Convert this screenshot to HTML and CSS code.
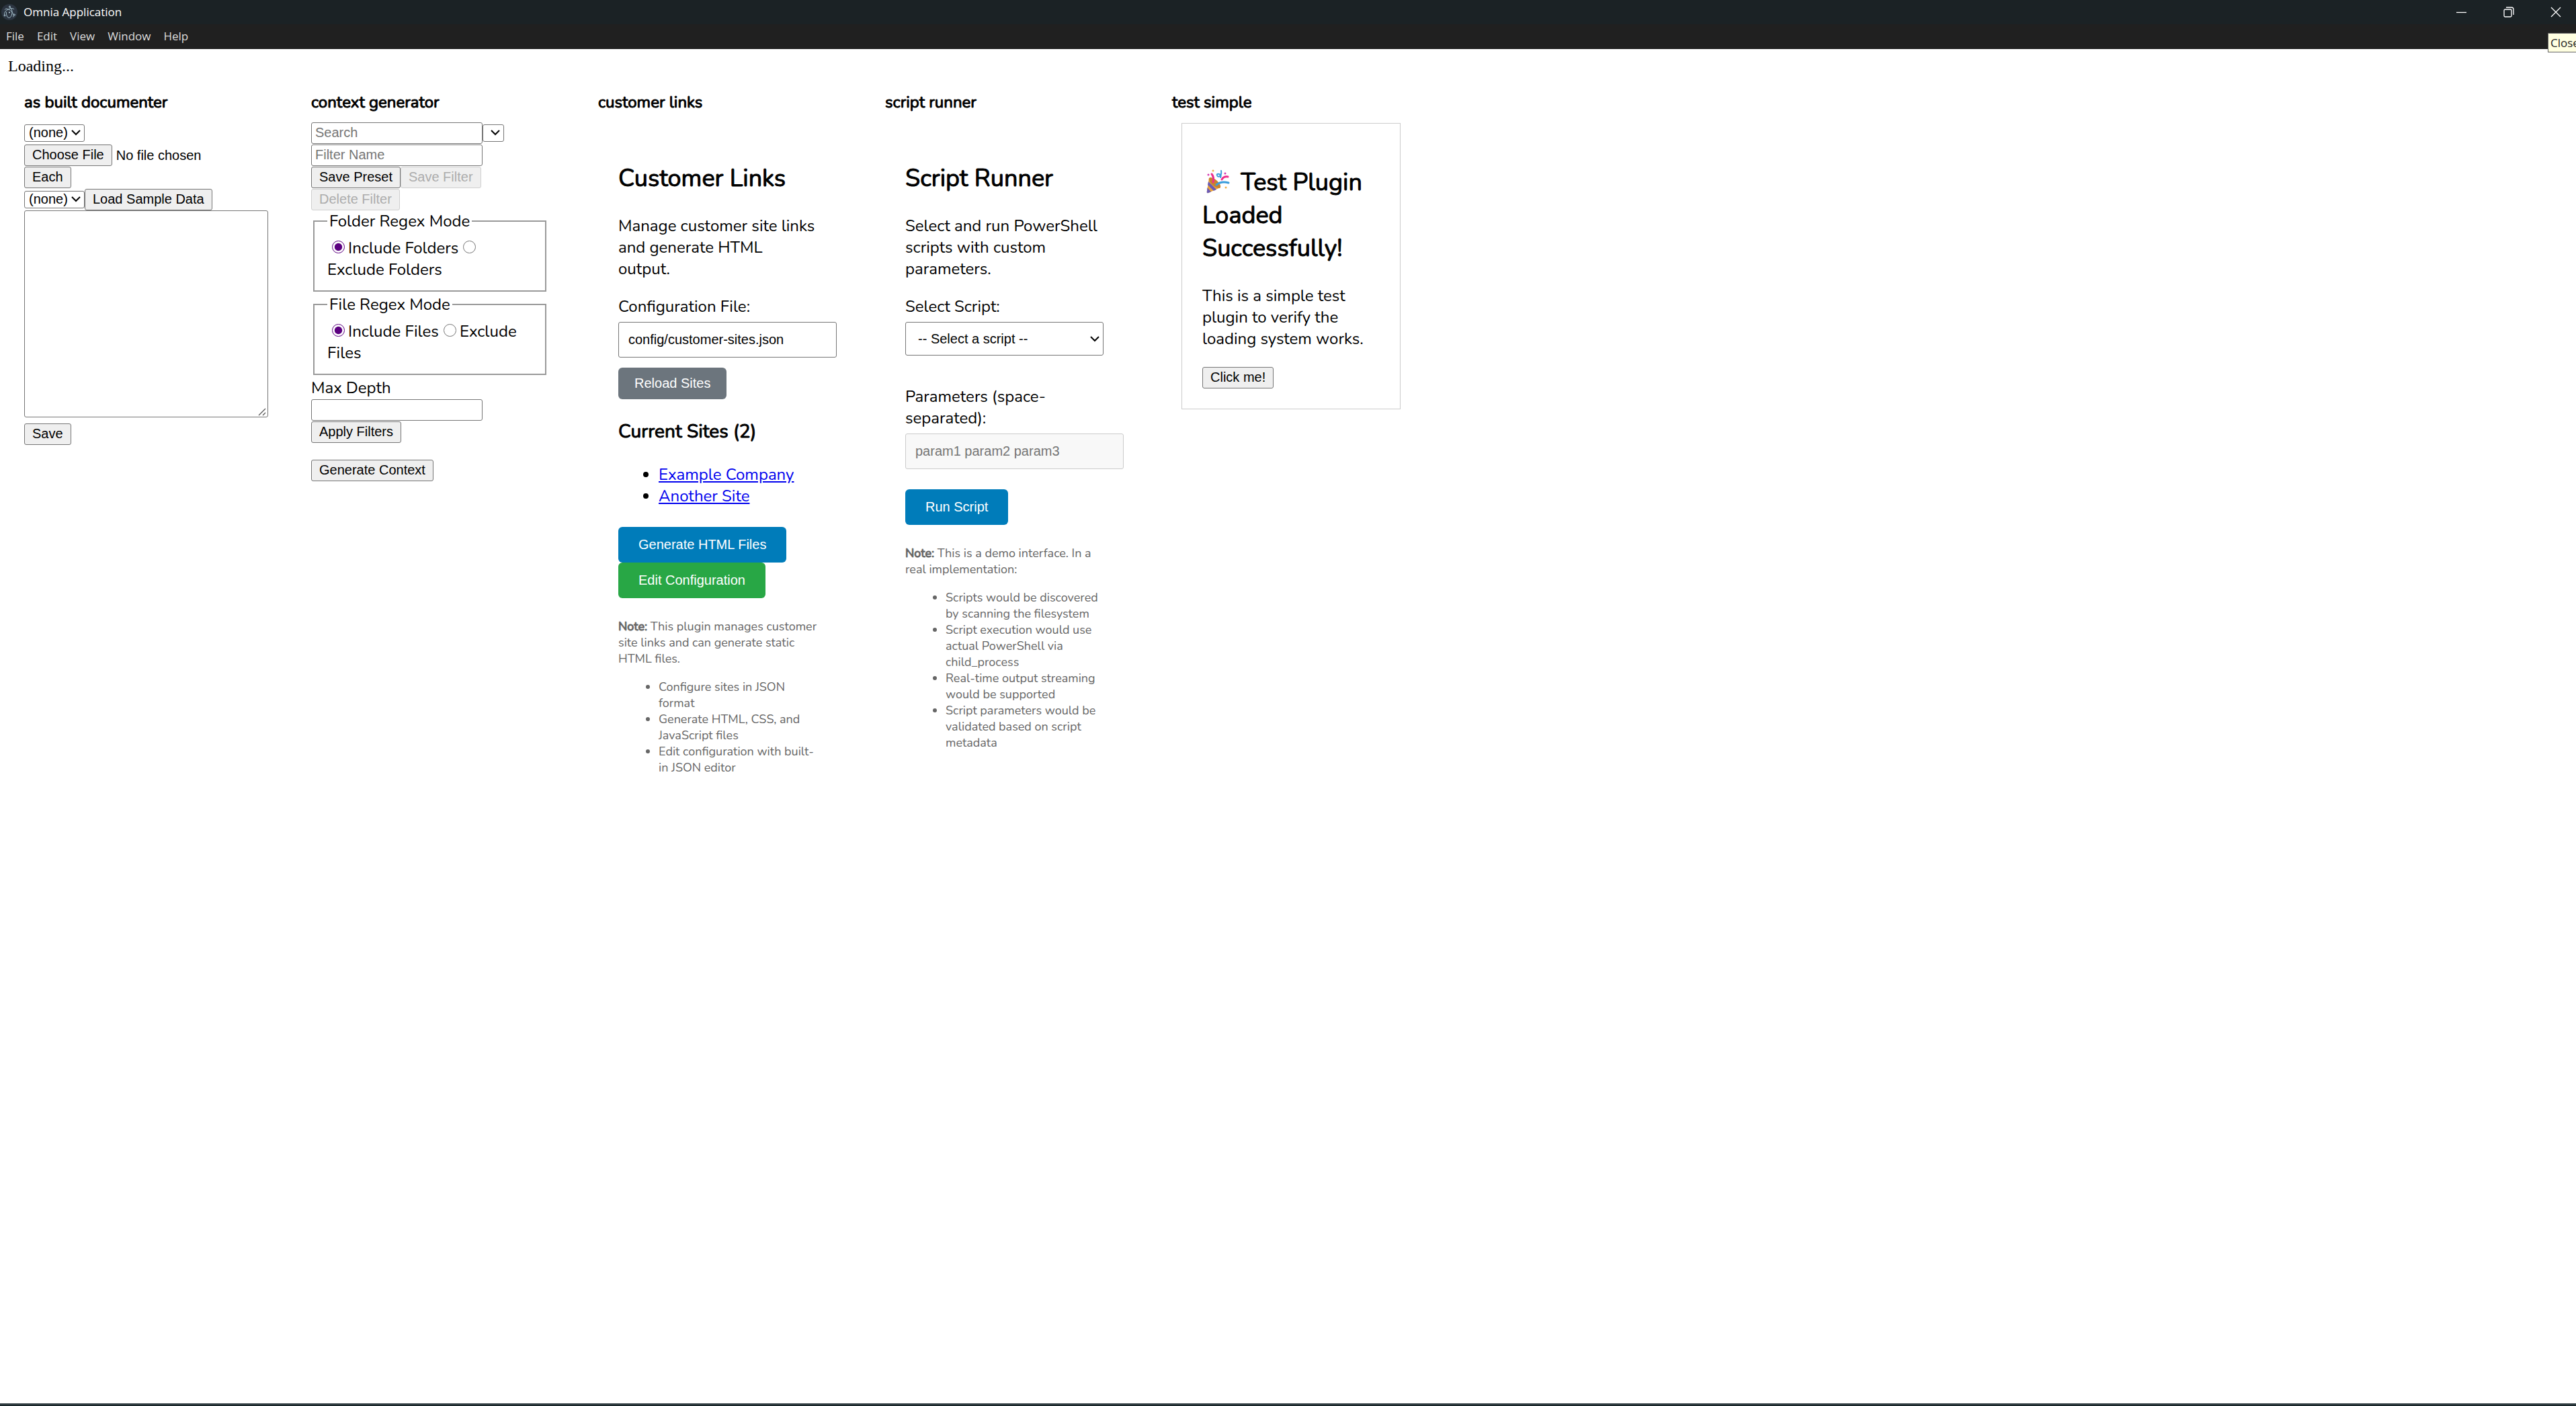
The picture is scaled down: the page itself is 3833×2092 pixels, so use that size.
FILE: index.html
```html
<!DOCTYPE html>
<html lang="en">
<head>
<meta charset="utf-8">
<meta name="viewport" content="width=device-width, initial-scale=1">
<title>Omnia Application</title>
<link rel="stylesheet" href="styles.css">
</head>
<body>
<header class="window-chrome">
  <div class="titlebar">
    <svg class="app-icon" viewBox="0 0 24 24" aria-hidden="true">
      <circle cx="12" cy="12" r="12" fill="#2b3440"/>
      <g fill="none" stroke="#a9c4d0" stroke-width="1">
        <path d="M5 16.500C3.500 14 6 10 10 8s8-2 9 0"/>
        <path d="M5 8.500C7 5.500 11.500 7.500 15 11s4 7.500 2 8.500"/>
        <path d="M11 4.500C14 4 16 8 16 12s-2 8.500-4.500 8.500S7 16.500 7.500 12"/>
        <circle cx="12.500" cy="4" r="1"/><circle cx="5" cy="17" r="1"/><circle cx="19.500" cy="16" r="1"/>
      </g>
      <circle cx="12" cy="12.500" r="1" fill="#c9e2ec"/>
    </svg>
    <span class="title">Omnia Application</span>
    <div class="window-buttons">
      <button type="button" class="window-button" aria-label="Minimize"><svg viewBox="0 0 16 16"><path d="M0 8.500h15"/></svg></button>
      <button type="button" class="window-button" aria-label="Restore"><svg viewBox="0 0 16 16"><rect x="1" y="4" width="11" height="11" rx="1.500"/><path d="M4 1h8a3 3 0 0 1 3 3v8"/></svg></button>
      <button type="button" class="window-button" aria-label="Close" aria-describedby="close-tip"><svg viewBox="0 0 16 16"><path d="M1 1l14 14M15 1L1 15"/></svg></button>
    </div>
  </div>
  <nav class="menubar">
    <button type="button">File</button>
    <button type="button">Edit</button>
    <button type="button">View</button>
    <button type="button">Window</button>
    <button type="button">Help</button>
  </nav>
  <div class="tooltip" id="close-tip" role="tooltip">Close</div>
</header>

<main class="content">
  <p class="status">Loading...</p>
  <div class="plugins">

    <section class="plugin">
      <h4>as built documenter</h4>
      <div class="row"><select aria-label="Template"><option>(none)</option></select></div>
      <div class="row"><input type="file" aria-label="Choose file"></div>
      <div class="row"><button type="button">Each</button></div>
      <div class="row"><select aria-label="Sample"><option>(none)</option></select><button type="button">Load Sample Data</button></div>
      <textarea aria-label="Document"></textarea>
      <div class="row save-row"><button type="button">Save</button></div>
    </section>

    <section class="plugin">
      <h4>context generator</h4>
      <div class="row"><input type="text" placeholder="Search" aria-label="Search"><select class="narrow" aria-label="Presets"><option></option></select></div>
      <div class="row"><input type="text" placeholder="Filter Name" aria-label="Filter Name"></div>
      <div class="row"><button type="button">Save Preset</button><button type="button" disabled>Save Filter</button></div>
      <div class="row"><button type="button" disabled>Delete Filter</button></div>
      <fieldset>
        <legend>Folder Regex Mode</legend>
        <label><input type="radio" name="folder-mode" checked>Include Folders</label><label><input type="radio" name="folder-mode">
        Exclude Folders</label>
      </fieldset>
      <fieldset>
        <legend>File Regex Mode</legend>
        <label><input type="radio" name="file-mode" checked>Include Files</label><label><input type="radio" name="file-mode">Exclude Files</label>
      </fieldset>
      <label class="block" for="depth">Max Depth</label>
      <div class="row"><input type="text" id="depth"></div>
      <div class="row"><button type="button">Apply Filters</button></div>
      <div class="row generate-row"><button type="button">Generate Context</button></div>
    </section>

    <section class="plugin">
      <h4>customer links</h4>
      <div class="panel">
        <h2>Customer Links</h2>
        <p>Manage customer site links and generate HTML output.</p>
        <label class="block" for="config">Configuration File:</label>
        <input type="text" class="large" id="config" value="config/customer-sites.json">
        <button type="button" class="action gray">Reload Sites</button>
        <h3>Current Sites (2)</h3>
        <ul>
          <li><a href="#example">Example Company</a></li>
          <li><a href="#another">Another Site</a></li>
        </ul>
        <div class="actions">
          <button type="button" class="action blue">Generate HTML Files</button>
          <button type="button" class="action green">Edit Configuration</button>
        </div>
        <div class="note">
          <p><strong>Note:</strong> This plugin manages customer site links and can generate static HTML files.</p>
          <ul>
            <li>Configure sites in JSON format</li>
            <li>Generate HTML, CSS, and JavaScript files</li>
            <li>Edit configuration with built-in JSON editor</li>
          </ul>
        </div>
      </div>
    </section>

    <section class="plugin">
      <h4>script runner</h4>
      <div class="panel">
        <h2>Script Runner</h2>
        <p>Select and run PowerShell scripts with custom parameters.</p>
        <label class="block" for="script">Select Script:</label>
        <select class="large" id="script"><option>-- Select a script --</option></select>
        <label class="block params" for="params">Parameters (space-separated):</label>
        <input type="text" class="large" id="params" placeholder="param1 param2 param3" disabled>
        <div class="actions">
          <button type="button" class="action blue">Run Script</button>
        </div>
        <div class="note">
          <p><strong>Note:</strong> This is a demo interface. In a real implementation:</p>
          <ul>
            <li>Scripts would be discovered by scanning the filesystem</li>
            <li>Script execution would use actual PowerShell via child_process</li>
            <li>Real-time output streaming would be supported</li>
            <li>Script parameters would be validated based on script metadata</li>
          </ul>
        </div>
      </div>
    </section>

    <section class="plugin">
      <h4>test simple</h4>
      <div class="card">
        <h2><svg class="popper" viewBox="0 0 48 36" role="img" aria-label="Party popper">
          <path d="M10 13L27 27 9 35Q6 36 7 32Z" fill="#e8a33d"/>
          <path d="M9 18L21 30 17 32 8 23Z M7.500 27L13 33.500 9 35Q6 36 7 32Z" fill="#6b5bb5"/>
          <ellipse cx="18.500" cy="20" rx="11" ry="4.500" transform="rotate(41 18.500 20)" fill="#c9812f"/>
          <g fill="none" stroke-width="3" stroke-linecap="round">
            <path d="M14 7q4 5 2 12" stroke="#ec2f8c"/>
            <path d="M29 15q3-5 9-4" stroke="#ec2f8c"/>
            <path d="M21 23q7-6 18-3" stroke="#3b9ddb"/>
            <path d="M28 2q1 6-2 8t-4-1 3-2 2 5" stroke="#3b9ddb" stroke-width="2"/>
          </g>
          <circle cx="16" cy="2" r="1.500" fill="#eeb04c"/><circle cx="9" cy="8" r="1.500" fill="#d637b0"/><circle cx="34" cy="6" r="1.500" fill="#d637b0"/><circle cx="35" cy="27" r="1.500" fill="#eeb04c"/>
        </svg> Test Plugin Loaded Successfully!</h2>
        <p>This is a simple test plugin to verify the loading system works.</p>
        <button type="button">Click me!</button>
      </div>
    </section>

  </div>
</main>
<footer class="window-edge"></footer>
</body>
</html>
```
FILE: styles.css
```css
* { box-sizing: border-box; }

body {
  margin: 0;
  min-height: 100vh;
  display: flex;
  flex-direction: column;
  background: #fff;
  color: #000;
  font: 24px/32px Nunito, Lato, sans-serif;
}

/* Window frame */
.window-chrome {
  position: relative;
  overflow-x: clip;
  font: 17px/36px "Open Sans", "Noto Sans", sans-serif;
  color: #fff;
}
.titlebar {
  display: flex;
  align-items: center;
  height: 36px;
  padding-left: 2px;
  background: #1b2225;
}
.app-icon { width: 24px; height: 24px; }
.title { margin-left: 9px; }
.window-buttons { display: flex; gap: 10px; margin-left: auto; }
.window-button {
  display: flex;
  align-items: center;
  justify-content: center;
  width: 60px;
  height: 36px;
  padding: 0;
  border: 0;
  background: none;
}
.window-button svg {
  width: 16px;
  height: 16px;
  fill: none;
  stroke: #fff;
  stroke-width: 1.3;
}
.menubar {
  display: flex;
  gap: 19px;
  height: 37px;
  padding-left: 9px;
  background: #202020;
}
.menubar button {
  height: 36px;
  padding: 0;
  border: 0;
  background: none;
  color: #ddd;
  font: inherit;
}
.tooltip {
  position: absolute;
  top: 49px;
  left: calc(100% - 42px);
  padding: 0 4px 0 3px;
  border: 1px solid #646464;
  background: #ffffe1;
  color: #222;
  line-height: 27px;
}
.window-edge {
  height: 4px;
  border-top: 2px solid #3a464a;
  background: #1a282c;
}

/* Page */
.content { flex: 1; padding: 12px; }
.status {
  margin: 0 0 24px;
  font: 24px/27px "Liberation Serif", serif;
}
.plugins {
  display: grid;
  grid-template-columns: repeat(auto-fill, 355px);
  gap: 72px;
  padding: 0 14px 0 24px;
}

h2, h3, h4, strong {
  font-weight: 400;
  -webkit-text-stroke: 1px currentColor;
}
h2 { margin: 30px 0; font-size: 36px; line-height: 49px; }
h3 { margin: 29px 0; font-size: 28px; line-height: 38px; }
h4 { margin: 0 0 13px; font-size: 24px; line-height: 32px; }
p { margin: 0 0 24px; }
ul { margin: 0; padding-left: 60px; }
a { color: #0000ee; }
.block { display: block; }

/* Controls */
.row {
  display: flex;
  align-items: center;
  height: 33px;
}
button, select, input, textarea { font: 20px/23px "Liberation Sans", sans-serif; }
button,
input::file-selector-button {
  height: 32px;
  padding: 0 11px;
  border: 1px solid #767676;
  border-radius: 3px;
  background: #efefef;
  color: #000;
}
input::file-selector-button { margin-right: 6px; font: inherit; }
button:disabled { border-color: #d0d0d0; color: #acacac; }
input[type="file"] { height: 32px; }
input[type="text"] {
  width: 255px;
  height: 32px;
  padding: 0 5px;
  border: 1px solid #767676;
  border-radius: 3px;
}
::placeholder { color: #757575; }
select {
  appearance: none;
  width: 90px;
  height: 26px;
  padding: 0 0 0 6px;
  border: 1px solid #767676;
  border-radius: 3px;
  background: #fff url("data:image/svg+xml,%3Csvg xmlns='http://www.w3.org/2000/svg' width='14' height='9'%3E%3Cpath d='M1 1l6 6 6-6' fill='none' stroke='%23000' stroke-width='2'/%3E%3C/svg%3E") no-repeat right 5px center;
  color: #000;
}
select.narrow { width: 32px; }
textarea {
  display: block;
  width: 363px;
  height: 308px;
  border: 1px solid #767676;
  border-radius: 3px;
}
textarea::-webkit-resizer {
  background: url("data:image/svg+xml,%3Csvg xmlns='http://www.w3.org/2000/svg' width='15' height='15'%3E%3Cpath d='M2 13L12 3M8 13l4-4' fill='none' stroke='%23555' stroke-width='1.3'/%3E%3C/svg%3E") no-repeat right bottom;
}
.save-row { margin-top: 8px; }
.generate-row { margin-top: 24px; }

fieldset {
  margin: 0 5px 3px 3px;
  padding: 8px 19px 15px;
  border: 2px solid #999;
}
fieldset legend { padding: 0 3px; }
input[type="radio"] {
  width: 19px;
  height: 19px;
  margin: 0 5px 0 7px;
  vertical-align: baseline;
  accent-color: #5c0080;
}

/* Plugin panels */
.panel { padding: 30px; }
.large { display: block; margin: 7px 0 15px; }
input.large {
  width: calc(100% + 30px);
  height: 53px;
  padding: 0 14px;
}
input.large:disabled { border-color: #ccc; background: #f8f8f8; }
select.large {
  width: 100%;
  height: 50px;
  padding-left: 18px;
}
.params { margin-top: 45px; }
.action {
  height: 53px;
  padding: 0 30px;
  border: 0;
  border-radius: 6px;
  color: #fff;
}
.gray { height: 47px; padding: 0 24px; background: #6c757d; }
.blue { background: #007cba; }
.green { background: #28a745; }
.actions {
  display: flex;
  flex-direction: column;
  align-items: flex-start;
  margin: 30px 0;
}
.note { color: #666; font-size: 18px; line-height: 24px; }
.note p { margin: 0 -5px 18px 0; }

.card {
  margin: 15px 15px 0 14px;
  padding: 33px 30px 30px;
  border: 1px solid #ccc;
}
h4 + .card { margin-top: 15px; }
.plugin { display: flow-root; }
.popper { width: 48px; height: 36px; vertical-align: -5px; }
```
